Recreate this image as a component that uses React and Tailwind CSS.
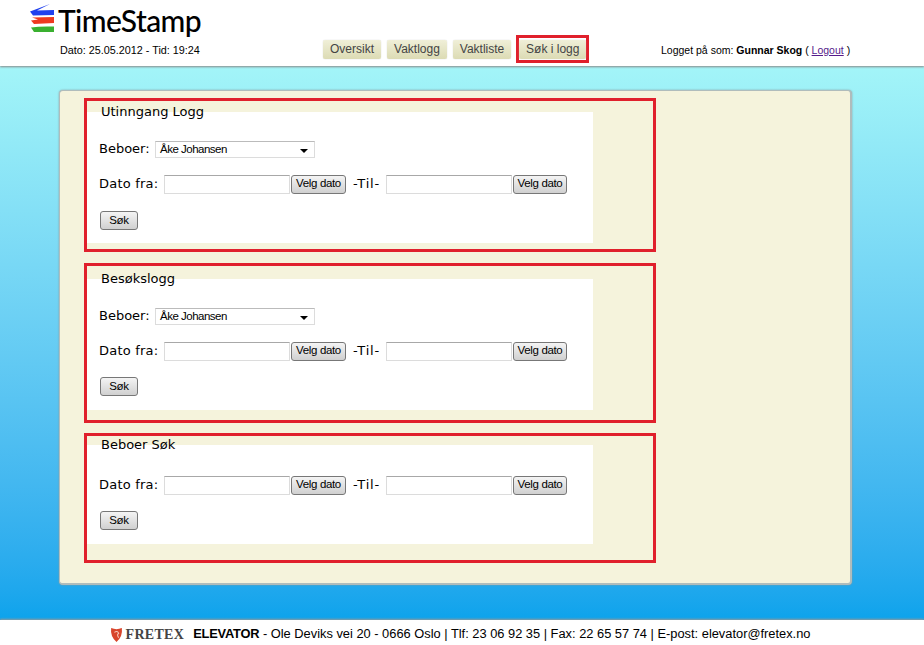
const arial = "font-['Liberation_Sans',Arial,sans-serif]";
const verdana = "font-['DejaVu_Sans',Verdana,sans-serif]";

function NavButton({ children, active }) {
    return (
        <div className={active ? "border-[3px] border-[#e0202c] h-[28px] flex items-center justify-center w-[73px] -ml-[1px]" : ""}>
            <div className={`h-[19px] flex items-center justify-center rounded-[2px] text-[12px] text-[#444] bg-gradient-to-b from-[#f0efd8] to-[#dcdbb4] shadow-[0_0_1px_#bbb] ${active ? "w-[67px]" : "px-[7px]"}`}>
                {children}
            </div>
        </div>
    );
}

function GreyButton({ children, className }) {
    return (
        <button className={`${className} h-[19px] shrink-0 rounded-[3px] border border-[#777] bg-gradient-to-b from-[#f4f4f4] to-[#d0d0d0] text-[11.5px] tracking-[-0.35px] text-black leading-none ${arial}`}>
            {children}
        </button>
    );
}

function DateRow() {
    return (
        <div className="flex items-center h-[20px]">
            <span className={`text-[13px] tracking-[0.2px] text-black w-[65px] ${verdana}`}>Dato fra:</span>
            <input className="w-[126px] h-[19px] border border-[#dcdcdc] border-t-[#a8a8a8] bg-white" />
            <GreyButton className="w-[55px] ml-[1px]">Velg dato</GreyButton>
            <span className={`text-[13px] tracking-[0.8px] text-black ml-[7px] w-[33px] ${verdana}`}>-Til-</span>
            <input className="w-[126px] h-[19px] border border-[#dcdcdc] border-t-[#a8a8a8] bg-white" />
            <GreyButton className="w-[54px] ml-[1px]">Velg dato</GreyButton>
        </div>
    );
}

function BeboerRow() {
    return (
        <div className="flex items-center h-[18px] mb-[16px]">
            <span className={`text-[13px] text-black w-[56px] ${verdana}`}>Beboer:</span>
            <div className={`relative w-[160px] h-[17px] border border-[#dcdcdc] border-t-[#bbb] bg-white text-[11.5px] tracking-[-0.5px] leading-[15px] pl-[4px] text-black ${arial}`}>
                Åke Johansen
                <span className="absolute right-[6px] top-[7px] w-0 h-0 border-x-[4px] border-x-transparent border-t-[4px] border-t-black"></span>
            </div>
        </div>
    );
}

function SearchBox({ title, height, whiteHeight, top, topGap, children }) {
    return (
        <div className={`border-[3px] border-[#e0202c] w-[572px] ${height} ${topGap} ${top}`}>
            <fieldset className={`bg-white w-[506px] ${whiteHeight} pl-[12px]`}>
                <legend className={`ml-[2px] text-[13px] leading-[18px] text-black ${verdana}`}>{title}</legend>
                {children}
                <GreyButton className="w-[38px] block ml-px">Søk</GreyButton>
            </fieldset>
        </div>
    );
}

export default function App() {
    return (
        <div className={`w-[924px] h-[645px] flex flex-col overflow-hidden bg-white ${arial}`}>
            <header className="h-[66px] shrink-0 flex relative z-10 shadow-[0_1px_2px_#888]">
                <div className="w-[323px] shrink-0 pl-[30px] pt-[4px]">
                    <div className="flex items-start h-[35px]">
                        <svg width="25" height="30" viewBox="0 0 25 30" className="shrink-0">
                            <path d="M20 0 L7 6.5 L24 6 L24 11 L3 11.5 L0 7.5 Z" fill="#2040ee" />
                            <path d="M2 13.5 L24 13 L24 19 L4 20 L1 16.5 L8 15.5 Z" fill="#ee3a20" />
                            <path d="M1 23.5 Q10 22 24 22.5 L24 28 L4 28 Z" fill="#3ab030" />
                        </svg>
                        <span className="ml-[3px] text-[30px] leading-[33px] font-['Lato',sans-serif] font-medium text-black tracking-[-0.6px]">TimeStamp</span>
                    </div>
                    <div className="pl-[30px] mt-[3px] text-[10.8px] text-black">Dato: 25.05.2012 - Tid: 19:24</div>
                </div>
                <nav className="flex gap-[6px] items-center h-[28px] mt-[35px] w-[338px] shrink-0">
                    <NavButton>Oversikt</NavButton>
                    <NavButton>Vaktlogg</NavButton>
                    <NavButton>Vaktliste</NavButton>
                    <NavButton active>Søk i logg</NavButton>
                </nav>
                <div className="pt-[43px] text-[10.5px] text-black whitespace-nowrap">
                    Logget på som: <b>Gunnar Skog</b> ( <a href="#" className="underline text-[#551a8b]">Logout</a> )
                </div>
            </header>
            <main className="flex-1 min-h-0 bg-gradient-to-b from-[#a3f5f8] to-[#0ba3ec] pt-[24px] pl-[59px]">
                <div className="w-[793px] h-[495px] bg-[#f5f3dc] rounded-[4px] border border-[#b0bcbc] border-r-2 border-b-2 shadow-[0_0_2px_#8a9a9a] pt-[7px] pl-[24px]">
                    <SearchBox title="Utinngang Logg" height="h-[154px]" whiteHeight="h-[140px]" top="" topGap="pt-[2px]">
                        <div className="h-[19px]"></div>
                        <BeboerRow />
                        <DateRow />
                        <div className="h-[17px]"></div>
                    </SearchBox>
                    <SearchBox title="Besøkslogg" height="h-[160px]" whiteHeight="h-[140px]" top="mt-[11px]" topGap="pt-[4px]">
                        <div className="h-[19px]"></div>
                        <BeboerRow />
                        <DateRow />
                        <div className="h-[16px]"></div>
                    </SearchBox>
                    <SearchBox title="Beboer Søk" height="h-[130px]" whiteHeight="h-[108px]" top="mt-[10px]" topGap="pt-0">
                        <div className="h-[21px]"></div>
                        <DateRow />
                        <div className="h-[16px]"></div>
                    </SearchBox>
                </div>
            </main>
            <footer className="h-[25px] shrink-0 flex items-center justify-center text-[12.85px] text-black shadow-[0_-1px_2px_#999] relative z-10 pr-[4px] pt-[3px]">
                <svg width="13" height="15" viewBox="0 0 12 14" className="mr-[3px] shrink-0">
                    <path d="M1 1 Q6 3 11 1 Q12 9 6 14 Q0 9 1 1 Z" fill="#d8452c" />
                    <path d="M4 5 Q7 3 8 6 Q6 7 8 10" stroke="#f6c8b8" fill="none" strokeWidth="1" />
                </svg>
                <span className="font-['Liberation_Serif',serif] font-bold text-[14px] tracking-[0.3px] text-[#444] mr-[9px]">FRETEX</span>
                <span className="whitespace-nowrap"><b className="tracking-[-0.2px]">ELEVATOR</b> - Ole Deviks vei 20 - 0666 Oslo | Tlf: 23 06 92 35 | Fax: 22 65 57 74 | E-post: elevator@fretex.no</span>
            </footer>
        </div>
    );
}
